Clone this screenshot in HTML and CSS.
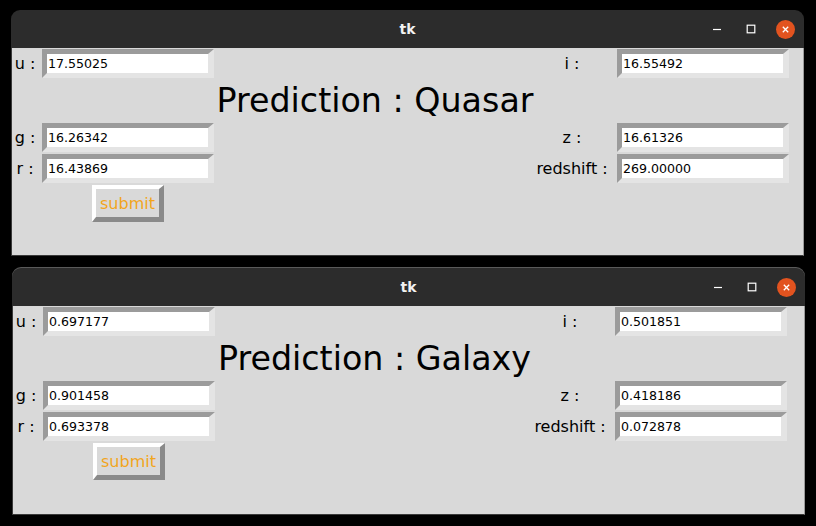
FILE: index.html
```html
<!DOCTYPE html>
<html>
<head>
<meta charset="utf-8">
<link rel="stylesheet" href="styles.css">
</head>
<body>
<div class="desk">
  <div class="window win-a">
    <div class="titlebar">
      <div></div>
      <div class="title">tk</div>
      <div class="controls">
        <span class="ctl"><svg width="10" height="10" viewBox="0 0 10 10"><path d="M1 5.5H9" stroke="#fff" stroke-width="1.2"/></svg></span>
        <span class="ctl"><svg width="10" height="10" viewBox="0 0 10 10"><rect x="1.2" y="1.2" width="7.6" height="7.6" fill="none" stroke="#fff" stroke-width="1.2"/></svg></span>
        <span class="ctl close"><svg width="19" height="19" viewBox="0 0 19 19"><circle cx="9.5" cy="9.5" r="9.5" fill="#e2531f"/><path d="M6.8 6.8L12.2 12.2M12.2 6.8L6.8 12.2" stroke="#fff" stroke-width="1.3"/></svg></span>
      </div>
    </div>
    <div class="content pad-a">
      <div class="lbl">u :</div>
      <div class="entry">17.55025</div>
      <div></div>
      <div class="lbl rl">i :</div>
      <div class="entry">16.55492</div>

      <div></div><div></div>
      <div class="prediction">Prediction : Quasar</div>
      <div></div><div></div>

      <div class="lbl">g :</div>
      <div class="entry">16.26342</div>
      <div></div>
      <div class="lbl rl">z :</div>
      <div class="entry">16.61326</div>

      <div class="lbl">r :</div>
      <div class="entry">16.43869</div>
      <div></div>
      <div class="lbl rl">redshift :</div>
      <div class="entry">269.00000</div>

      <div></div>
      <div class="btn-cell"><div class="button">submit</div></div>
    </div>
  </div>

  <div class="window win-b">
    <div class="titlebar">
      <div></div>
      <div class="title">tk</div>
      <div class="controls">
        <span class="ctl"><svg width="10" height="10" viewBox="0 0 10 10"><path d="M1 5.5H9" stroke="#fff" stroke-width="1.2"/></svg></span>
        <span class="ctl"><svg width="10" height="10" viewBox="0 0 10 10"><rect x="1.2" y="1.2" width="7.6" height="7.6" fill="none" stroke="#fff" stroke-width="1.2"/></svg></span>
        <span class="ctl close"><svg width="19" height="19" viewBox="0 0 19 19"><circle cx="9.5" cy="9.5" r="9.5" fill="#e2531f"/><path d="M6.8 6.8L12.2 12.2M12.2 6.8L6.8 12.2" stroke="#fff" stroke-width="1.3"/></svg></span>
      </div>
    </div>
    <div class="content pad-b">
      <div class="lbl">u :</div>
      <div class="entry">0.697177</div>
      <div></div>
      <div class="lbl rl">i :</div>
      <div class="entry">0.501851</div>

      <div></div><div></div>
      <div class="prediction">Prediction : Galaxy</div>
      <div></div><div></div>

      <div class="lbl">g :</div>
      <div class="entry">0.901458</div>
      <div></div>
      <div class="lbl rl">z :</div>
      <div class="entry">0.418186</div>

      <div class="lbl">r :</div>
      <div class="entry">0.693378</div>
      <div></div>
      <div class="lbl rl">redshift :</div>
      <div class="entry">0.072878</div>

      <div></div>
      <div class="btn-cell"><div class="button">submit</div></div>
    </div>
  </div>
</div>
</body>
</html>
```

FILE: styles.css
```css
html, body {
  margin: 0;
  padding: 0;
  background: #000;
}
body {
  width: 816px;
  height: 526px;
  overflow: hidden;
  font-family: "DejaVu Sans", sans-serif;
}
.desk {
  padding-top: 10px;
}
.window {
  width: 793px;
}
.win-a {
  margin-left: 11px;
}
.win-b {
  margin-left: 12px;
  margin-top: 12px;
}
.titlebar {
  height: 38px;
  background: #2c2c2c;
  border-radius: 9px 9px 0 0;
  display: grid;
  grid-template-columns: 1fr auto 1fr;
  align-items: center;
}
.win-b .titlebar {
  box-shadow: 0 -1px 0 #5a5a5a;
}
.title {
  color: #f2f2f2;
  font-weight: bold;
  font-size: 14px;
  text-align: center;
}
.controls {
  justify-self: end;
  display: flex;
  align-items: center;
  gap: 10px;
  padding-right: 7px;
}
.ctl {
  width: 24px;
  height: 24px;
  display: flex;
  align-items: center;
  justify-content: center;
}
.content {
  box-sizing: border-box;
  background: #d9d9d9;
  border-left: 1px solid #3a3a3a;
  border-right: 1px solid #9a9a9a;
  border-bottom: 1px solid #3a3a3a;
  padding-top: 1px;
  display: grid;
  grid-template-columns: 30px 172px 1fr 81px 172px;
  grid-template-rows: 29px 41px 29px 29px 37px;
  row-gap: 2px;
  align-content: start;
}
.pad-a {
  height: 208px;
  padding-right: 14px;
}
.pad-b {
  height: 209px;
  padding-right: 17px;
}
.lbl {
  font-size: 16px;
  line-height: 29px;
  color: #000;
  text-align: center;
  padding-right: 4px;
  white-space: nowrap;
}
.lbl.rl {
  padding-right: 9px;
}
.entry {
  box-sizing: border-box;
  height: 29px;
  border-style: solid;
  border-width: 5px 6px 5px 5px;
  border-color: #9b9b9b #e4e4e4 #e4e4e4 #9b9b9b;
  background: #fff;
  font-size: 12.6px;
  line-height: 19px;
  padding-left: 1px;
  color: #000;
  white-space: nowrap;
}
.prediction {
  font-size: 33.3px;
  line-height: 41px;
  text-align: center;
  color: #000;
  white-space: nowrap;
}
.btn-cell {
  display: flex;
  justify-content: center;
}
.button {
  box-sizing: border-box;
  width: 72px;
  height: 37px;
  border-style: solid;
  border-width: 4px 5px 5px 4px;
  border-color: #ffffff #8a8a8a #8a8a8a #ffffff;
  background: #d9d9d9;
  color: #f2a51c;
  font-size: 16px;
  line-height: 30px;
  text-align: center;
}
```
